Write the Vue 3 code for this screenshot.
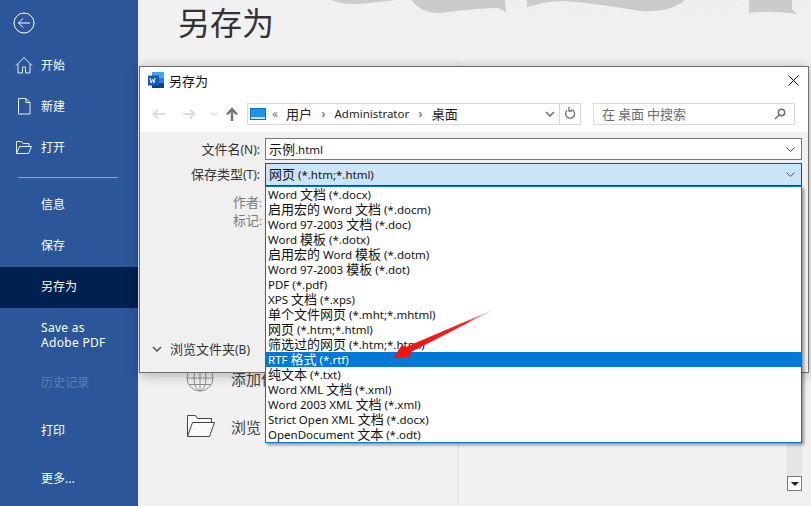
<script setup>
import { h } from 'vue'

const Mixed = (props) =>
  props.t
    .split(/([\u4e00-\u9fff]+)/)
    .filter(Boolean)
    .map((p) => h('span', { class: /[\u4e00-\u9fff]/.test(p) ? 'zh' : 'la' }, p))
Mixed.props = ['t']

const navTop = [
  { label: '开始', icon: 'home' },
  { label: '新建', icon: 'new' },
  { label: '打开', icon: 'open' }
]
const navMid = [
  { label: '信息' },
  { label: '保存' },
  { label: '另存为', active: true },
  { label: 'Save as\nAdobe PDF', tall: true },
  { label: '历史记录', disabled: true }
]
const types = [
  'Word 文档 (*.docx)', '启用宏的 Word 文档 (*.docm)', 'Word 97-2003 文档 (*.doc)', 'Word 模板 (*.dotx)',
  '启用宏的 Word 模板 (*.dotm)', 'Word 97-2003 模板 (*.dot)', 'PDF (*.pdf)', 'XPS 文档 (*.xps)',
  '单个文件网页 (*.mht;*.mhtml)', '网页 (*.htm;*.html)', '筛选过的网页 (*.htm;*.html)', 'RTF 格式 (*.rtf)',
  '纯文本 (*.txt)', 'Word XML 文档 (*.xml)', 'Word 2003 XML 文档 (*.xml)', 'Strict Open XML 文档 (*.docx)',
  'OpenDocument 文本 (*.odt)'
]
</script>

<template>
  <div class="page">
    <aside class="side">
      <div class="back">
        <svg width="22" height="22" viewBox="0 0 22 22" fill="none" stroke="#fff" stroke-width="1">
          <circle cx="11" cy="11" r="10" />
          <path d="M17 11H5.500M10 6.500L5.500 11l4.500 4.500" />
        </svg>
      </div>
      <nav class="top-nav">
        <div v-for="n in navTop" :key="n.label" class="nav-top">
          <svg class="nav-ico" width="18" height="18" viewBox="0 0 18 18" fill="none" stroke="#e8edf5" stroke-width="1">
            <path v-if="n.icon === 'home'" d="M1 9.500L9 1.500l8 8M3 8v9h4.500v-6h3v6H15V8" />
            <path v-else-if="n.icon === 'new'" d="M3.500 1.500h7.500l4 4v11.500H3.500zM11 1.500v4h4" />
            <path v-else d="M1.500 15.500v-12h5l1.500 2h6v3M1.500 15.500h12l3-7H4.500z" />
          </svg>
          <span>{{ n.label }}</span>
        </div>
      </nav>
      <div class="rule"></div>
      <nav class="mid-nav">
        <div
          v-for="n in navMid"
          :key="n.label"
          class="nav-item"
          :class="{ active: n.active, tall: n.tall, disabled: n.disabled }"
        >{{ n.label }}</div>
      </nav>
      <div class="side-bottom">
        <div class="nav-item">打印</div>
        <div class="nav-item">更多...</div>
      </div>
    </aside>

    <main class="main">
      <svg class="deco" width="673" height="62" viewBox="138 0 673 62">
        <defs>
          <linearGradient id="fade" x1="0" y1="0" x2="0" y2="1">
            <stop offset="0" stop-color="#000" stop-opacity=".12" />
            <stop offset="1" stop-color="#000" stop-opacity="0" />
          </linearGradient>
          <linearGradient id="side" x1="330" y1="0" x2="480" y2="0" gradientUnits="userSpaceOnUse">
            <stop offset="0" stop-color="#fff" stop-opacity="0" />
            <stop offset="1" stop-color="#fff" stop-opacity="1" />
          </linearGradient>
          <mask id="sm"><rect x="138" y="0" width="673" height="62" fill="url(#side)" /></mask>
          <filter id="speck" x="0" y="0" width="100%" height="100%">
            <feTurbulence type="fractalNoise" baseFrequency="1.1" numOctaves="2" seed="4" result="n" />
            <feColorMatrix in="n" type="matrix" values="0 0 0 0 .6  0 0 0 0 .6  0 0 0 0 .6  1.800 0 0 0 -.6" result="d" />
            <feComposite in="d" in2="SourceGraphic" operator="in" />
          </filter>
        </defs>
        <g mask="url(#sm)">
          <rect x="320" y="0" width="491" height="36" fill="url(#fade)" filter="url(#speck)" />
        </g>
        <g fill="#cbcbcb">
          <path d="M331 0Q345 6 370 3L395 0Z" />
          <path d="M412 0Q420 13 440 13Q480 8 498 8L506 12L505 0Z" />
          <path d="M527 0V7Q545 1 565 1Q600 4 640 11Q670 13 685 0Z" />
          <path d="M749 0V13Q770 10 797 14L792 9V0Z" />
        </g>
      </svg>
      <h1 class="title">另存为</h1>
      <div class="back-rows">
        <div class="back-row">
          <svg width="28" height="28" viewBox="0 0 28 28" fill="none" stroke="#8f8f8f" stroke-width="1">
            <circle cx="14" cy="14" r="13" />
            <ellipse cx="14" cy="14" rx="6" ry="13" />
            <path d="M1 14h26M3 7.500h22M3 20.500h22M14 1v26" />
            <rect x="2" y="1" width="5" height="5" fill="#5f9b7d" stroke="none" />
          </svg>
          <span>添加位置</span>
        </div>
        <div class="back-row">
          <svg width="30" height="24" viewBox="0 0 30 24" fill="#fafafa" stroke="#444" stroke-width="1">
            <path d="M1.500 22.500V1.500h8l2 3h14v4" />
            <path d="M1.500 22.500h22l5-14H6.500z" />
          </svg>
          <span>浏览</span>
        </div>
      </div>
      <div class="vline"></div>
      <div class="scroll">
        <div class="scroll-btn"><i></i></div>
      </div>
    </main>

    <section class="dialog">
      <header class="d-title">
        <svg width="16" height="16" viewBox="0 0 16 16">
          <rect x="4" y="0" width="12" height="5.500" fill="#41a5ee" />
          <rect x="4" y="5.500" width="12" height="5" fill="#2b7cd3" />
          <rect x="4" y="10.500" width="12" height="5.500" fill="#103f91" />
          <rect x="0" y="3.500" width="11" height="10" fill="#185abd" />
          <path d="M2 6l1.200 5 1.300-4 1.300 4L7 6" fill="none" stroke="#fff" stroke-width="1" />
        </svg>
        <Mixed t="另存为" />
        <svg class="close" width="11" height="11" viewBox="0 0 11 11" stroke="#111" stroke-width="1">
          <path d="M.5.500l10 10M10.500.500l-10 10" />
        </svg>
      </header>
      <div class="d-bar">
        <svg width="92" height="16" viewBox="0 0 92 16" fill="none" stroke-width="2">
          <path d="M14 8H3M7 3.500L2.500 8 7 12.500" stroke="#dcdcdc" />
          <path d="M32 8h11M39 3.500L43.500 8 39 12.500" stroke="#dcdcdc" />
          <path d="M60 6.500l3 3 3-3" stroke="#e0e0e0" stroke-width="1.500" />
          <path d="M81 15V4M76 8.500L81 3l5 5.500" stroke="#767676" stroke-width="2.500" />
        </svg>
        <div class="crumb">
          <svg class="pc" width="16" height="12" viewBox="0 0 16 12">
            <rect x=".5" y=".5" width="15" height="11" fill="#1e93ee" stroke="#0a6fc0" />
            <rect x="1" y="9" width="14" height="2" fill="#bfe3fb" />
          </svg>
          <span class="gt">«</span>
          <Mixed t="用户" /><span class="sep">›</span>
          <Mixed t="Administrator" /><span class="sep">›</span>
          <Mixed t="桌面" />
          <svg class="crumb-chev" width="10" height="6" viewBox="0 0 10 6" fill="none" stroke="#6d6d6d" stroke-width="1.500">
            <path d="M1 1l4 4 4-4" />
          </svg>
          <div class="refresh">
            <svg width="12" height="13" viewBox="0 0 12 13" fill="none" stroke="#6d6d6d" stroke-width="1.300">
              <path d="M7.500 2.500A4.500 4.500 0 1 1 3 3.500M5 0v4h3" />
            </svg>
          </div>
        </div>
        <div class="search">
          <span><Mixed t="在 桌面 中搜索" /></span>
          <svg width="12" height="12" viewBox="0 0 12 12" fill="none" stroke="#6d6d6d" stroke-width="1.500">
            <circle cx="7.500" cy="4.500" r="3.200" />
            <path d="M5 7L1 11" />
          </svg>
        </div>
      </div>
      <div class="d-form">
        <div class="row">
          <label class="lab"><Mixed t="文件名(N):" /></label>
          <div class="field">
            <span class="val"><Mixed t="示例.html" /></span>
            <svg width="9" height="5" viewBox="0 0 9 5" fill="none" stroke="#555"><path d="M.5.500l4 4 4-4" /></svg>
          </div>
        </div>
        <div class="row">
          <label class="lab"><Mixed t="保存类型(T):" /></label>
          <div class="field selected">
            <span class="val"><Mixed t="网页 (*.htm;*.html)" /></span>
            <svg width="9" height="5" viewBox="0 0 9 5" fill="none" stroke="#555"><path d="M.5.500l4 4 4-4" /></svg>
          </div>
        </div>
        <div class="meta">
          <div class="meta-line"><Mixed t="作者:" /></div>
          <div class="meta-line"><Mixed t="标记:" /></div>
        </div>
        <div class="browse">
          <svg width="10" height="6" viewBox="0 0 10 6" fill="none" stroke="#555" stroke-width="1.500"><path d="M1 1l4 4 4-4" /></svg>
          <span class="lab"><Mixed t="浏览文件夹(B)" /></span>
        </div>
      </div>
    </section>

    <ul class="drop">
      <li v-for="t in types" :key="t" :class="{ hit: t.startsWith('RTF') }"><Mixed :t="t" /></li>
    </ul>

    <svg class="arrow" width="811" height="506" viewBox="0 0 811 506">
      <defs>
        <linearGradient id="ag" x1="497" y1="308" x2="393" y2="358" gradientUnits="userSpaceOnUse">
          <stop offset="0" stop-color="#ff6a6a" stop-opacity=".1" />
          <stop offset=".3" stop-color="#f52020" />
          <stop offset="1" stop-color="#ee1111" />
        </linearGradient>
      </defs>
      <polygon points="497,308 411,352 409,357 393,358 402,345 406,347" fill="url(#ag)" />
    </svg>
  </div>
</template>

<style scoped>
.page {
  position: relative;
  display: flex;
  width: 811px;
  height: 506px;
  overflow: hidden;
  background: #f1f1f1;
  font-family: "Noto Sans", "Noto Sans CJK SC", sans-serif;
  font-size: 12px;
  color: #222;
}
.side {
  flex: 0 0 138px;
  display: flex;
  flex-direction: column;
  background: #2b579a;
  color: #fff;
}
.back { height: 32px; padding: 12px 0 0 13px; }
.top-nav { display: flex; flex-direction: column; }
.nav-top {
  display: flex;
  align-items: center;
  gap: 8px;
  height: 41px;
  padding-left: 15px;
}
.nav-ico { flex: none; }
.rule { height: 1px; margin: 10px 20px 0 18px; background: #8ba6cd; }
.mid-nav { display: flex; flex-direction: column; margin-top: 7px; }
.nav-item {
  display: flex;
  align-items: center;
  box-sizing: border-box;
  height: 41px;
  padding: 0 0 2px 41px;
  white-space: pre-line;
  line-height: 15px;
}
.nav-item.active { background: #002050; }
.nav-item.tall { height: 54px; padding-bottom: 0; letter-spacing: .3px; }
.nav-item.disabled { padding-bottom: 0; color: #5c7fb5; }
.side-bottom { display: flex; flex-direction: column; gap: 7px; margin-top: 8px; }
.main { position: relative; flex: 1; display: flex; flex-direction: column; }
.deco { position: absolute; left: 0; top: 0; }
.title {
  position: relative;
  margin: 0;
  padding: 0 0 0 40px;
  height: 47px;
  font-size: 32px;
  line-height: 45px;
  font-weight: 400;
  color: #333;
}
.back-rows {
  display: flex;
  flex-direction: column;
  gap: 20px;
  margin-top: 317px;
  padding-left: 48px;
}
.back-row {
  display: grid;
  grid-template-columns: 30px auto;
  align-items: center;
  gap: 15px;
  height: 28px;
  font-size: 15px;
  color: #444;
}
.vline { position: absolute; left: 320px; top: 62px; bottom: 0; width: 1px; background: #e1e1e1; }
.scroll {
  position: absolute;
  left: 649px;
  top: 65px;
  bottom: 15px;
  width: 15px;
  background: #e6e6e6;
  display: flex;
  align-items: flex-end;
}
.scroll-btn {
  width: 15px;
  height: 15px;
  box-sizing: border-box;
  border: 1px solid #7a7a7a;
  background: #fff;
  display: flex;
  align-items: center;
  justify-content: center;
}
.scroll-btn i {
  width: 0;
  height: 0;
  border-left: 4px solid transparent;
  border-right: 4px solid transparent;
  border-top: 4px solid #222;
}
.dialog {
  position: absolute;
  left: 139px;
  top: 66px;
  width: 670px;
  height: 307px;
  box-sizing: border-box;
  border: 1px solid #6f6f6f;
  background: #f0f0f0;
  box-shadow: 0 2px 12px rgba(0, 0, 0, .28);
  display: flex;
  flex-direction: column;
}
.d-title {
  display: flex;
  align-items: center;
  gap: 5px;
  box-sizing: border-box;
  height: 28px;
  padding: 0 0 2px 8px;
  background: #fff;
  color: #111;
}
.close { margin-left: auto; margin-right: 9px; }
.d-bar {
  display: flex;
  align-items: center;
  height: 37px;
  padding: 0 12px 0 11px;
  background: #fff;
}
.crumb {
  display: flex;
  align-items: center;
  width: 334px;
  height: 22px;
  margin-left: 4px;
  box-sizing: border-box;
  border: 1px solid #d9d9d9;
  color: #222;
}
.pc { margin-left: 2px; }
.gt { margin: 0 8px 0 6px; color: #777; }
.sep { margin: 0 9px; color: #888; font-weight: 700; }
.crumb-chev { margin-left: auto; margin-right: 4px; }
.refresh {
  width: 20px;
  height: 20px;
  border-left: 1px solid #d9d9d9;
  display: flex;
  align-items: center;
  justify-content: center;
}
.search {
  display: flex;
  align-items: center;
  justify-content: space-between;
  width: 202px;
  height: 22px;
  margin-left: 12px;
  padding: 0 8px;
  box-sizing: border-box;
  border: 1px solid #d9d9d9;
  color: #6d6d6d;
}
.d-form {
  flex: 1;
  display: flex;
  flex-direction: column;
  padding-top: 6px;
}
.row { display: flex; align-items: center; height: 22px; margin-bottom: 3px; }
.row label { width: 120px; margin-bottom: 2px; text-align: right; color: #333; padding-right: 5px; }
.field {
  display: flex;
  align-items: center;
  justify-content: space-between;
  width: 537px;
  height: 22px;
  box-sizing: border-box;
  border: 1px solid #7a7a7a;
  background: #fff;
  padding: 0 6px 0 3px;
  color: #111;
}
.val { margin-bottom: 2px; }
.field.selected { height: 23px; background: #cce4f7; border-color: #005499; }
.meta {
  margin-top: 5px;
  width: 122px;
  text-align: right;
  color: #7a7a7a;
}
.meta-line { height: 18px; line-height: 18px; }
.browse {
  display: flex;
  align-items: center;
  gap: 8px;
  margin-top: auto;
  margin-bottom: 14px;
  padding-left: 12px;
  color: #333;
}
.drop {
  position: absolute;
  left: 265px;
  top: 186px;
  width: 537px;
  height: 257px;
  margin: 0;
  padding: 0;
  box-sizing: border-box;
  list-style: none;
  background: #fff;
  border: 1px solid #0078d7;
  box-shadow: 2px 2px 3px rgba(0, 0, 0, .4);
  color: #111;
}
.drop li { height: 15px; line-height: 15px; padding-left: 2px; white-space: nowrap; }
.drop li.hit { background: #0078d7; color: #fff; }
.arrow { position: absolute; left: 0; top: 0; pointer-events: none; }
</style>

<style>
.zh { font-size: 13px; }
.la { font-size: 11.5px; }
.lab .la { font-size: 12px; }
</style>
